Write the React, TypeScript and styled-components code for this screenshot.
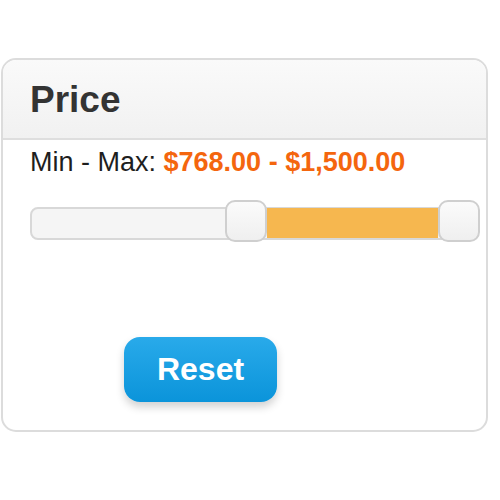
import styled, { createGlobalStyle } from 'styled-components';

const GlobalStyle = createGlobalStyle`
  body {
    margin: 0;
    background: #ffffff;
    font-family: 'Liberation Sans', Arial, sans-serif;
  }
`;

const Card = styled.div`
  box-sizing: border-box;
  width: 487px;
  height: 374px;
  margin: 58px 0 0 1px;
  border: 2px solid #dcdcdc;
  border-radius: 15px;
  overflow: hidden;
  background: #ffffff;
  display: flex;
  flex-direction: column;
`;

const Header = styled.div`
  display: flex;
  align-items: center;
  height: 78px;
  padding-left: 27px;
  background: linear-gradient(#fafafa, #f1f1f1);
  border-bottom: 2px solid #dedede;
`;

const Title = styled.h2`
  margin: 0;
  font-size: 37px;
  line-height: 1;
  font-weight: bold;
  color: #333333;
`;

const Body = styled.div`
  display: flex;
  flex-direction: column;
  align-items: flex-start;
  padding: 7px 5px 0 27px;
`;

const RangeText = styled.div`
  font-size: 27px;
  line-height: 31px;
  color: #1e1e1e;
`;

const RangeValue = styled.span`
  font-weight: bold;
  color: #f4660e;
`;

// the track is painted behind the handles by ::before, handles and fill flow in a row
const Slider = styled.div`
  position: relative;
  display: flex;
  align-items: flex-start;
  margin-top: 22px;
  height: 42px;
  width: 450px;

  &::before {
    content: '';
    position: absolute;
    left: 0;
    right: 2px;
    top: 7px;
    height: 33px;
    box-sizing: border-box;
    border: 2px solid #d8d8d8;
    border-radius: 8px;
    background: #f5f5f5;
  }
`;

const Spacer = styled.div`
  flex-shrink: 0;
`;

const Fill = styled.div`
  position: relative;
  margin-top: 8px;
  height: 30px;
  background: #f6b74f;
`;

const Handle = styled.div`
  position: relative;
  flex-shrink: 0;
  width: 42px;
  height: 42px;
  box-sizing: border-box;
  border: 2px solid #cfcfcf;
  border-radius: 10px;
  background: linear-gradient(#fbfbfb, #efefef);
`;

const ResetButton = styled.button`
  margin: 95px 0 0 94px;
  width: 153px;
  height: 65px;
  border: none;
  border-radius: 16px;
  background: linear-gradient(#29aaea, #0b94da);
  box-shadow: 0 5px 8px rgba(0, 0, 0, 0.18);
  color: #ffffff;
  font-family: 'Liberation Sans', Arial, sans-serif;
  font-size: 32px;
  font-weight: bold;
  cursor: pointer;
`;

const RANGE_MIN = 100;
const RANGE_MAX = 1500;
const SLIDER_WIDTH = 450;
const HANDLE = 42;

const fmt = (n: number) =>
  '$' + n.toLocaleString('en-US', { minimumFractionDigits: 2, maximumFractionDigits: 2 });

const App = () => {
  const low = 768;
  const high = 1500;
  const usable = SLIDER_WIDTH - HANDLE;
  const toPx = (v: number) => ((v - RANGE_MIN) / (RANGE_MAX - RANGE_MIN)) * usable;
  const lowX = toPx(low);
  const highX = toPx(high);

  return (
    <>
      <GlobalStyle />
      <Card>
        <Header>
          <Title>Price</Title>
        </Header>
        <Body>
          <RangeText>
            Min - Max:{' '}
            <RangeValue>
              {fmt(low)} - {fmt(high)}
            </RangeValue>
          </RangeText>
          <Slider>
            <Spacer style={{ width: lowX }} />
            <Handle />
            <Fill style={{ width: highX - lowX - HANDLE }} />
            <Handle />
          </Slider>
          <ResetButton>Reset</ResetButton>
        </Body>
      </Card>
    </>
  );
};

export default App;
